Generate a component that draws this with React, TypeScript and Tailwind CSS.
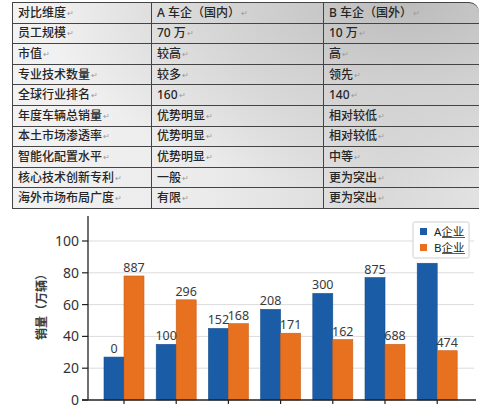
import React from "react";

const rows: [string, string, string][] = [
  ["对比维度", "A 车企（国内）", "B 车企（国外）"],
  ["员工规模", "70 万", "10 万"],
  ["市值", "较高", "高"],
  ["专业技术数量", "较多", "领先"],
  ["全球行业排名", "160", "140"],
  ["年度车辆总销量", "优势明显", "相对较低"],
  ["本土市场渗透率", "优势明显", "相对较低"],
  ["智能化配置水平", "优势明显", "中等"],
  ["核心技术创新专利", "一般", "更为突出"],
  ["海外市场布局广度", "有限", "更为突出"],
];

const groups = [
  { a: 27, b: 78, la: "0", lb: "887" },
  { a: 35, b: 63, la: "100", lb: "296" },
  { a: 45, b: 48, la: "152", lb: "168" },
  { a: 57, b: 42, la: "208", lb: "171" },
  { a: 67, b: 38, la: "300", lb: "162" },
  { a: 77, b: 35, la: "875", lb: "688" },
  { a: 86, b: 31, la: "", lb: "474" },
];

const BLUE = "#1b5ca6";
const ORANGE = "#e8711f";

function Chart() {
  const y0 = 191;
  const k = 1.59;
  const ticks = [0, 20, 40, 60, 80, 100];
  const font = "'Noto Sans','Noto Sans CJK SC',sans-serif";
  return (
    <svg width={487} height={202} viewBox="0 0 487 202" className="block">
      {ticks.slice(1).map((t) => (
        <line key={t} x1={88} x2={474} y1={y0 - t * k} y2={y0 - t * k} stroke="#dcdcdc" strokeWidth={1} />
      ))}
      {groups.map((g, i) => {
        const cx = 124 + i * 52.2;
        const ha = g.a * k;
        const hb = g.b * k;
        return (
          <g key={i}>
            <rect x={cx - 20} y={y0 - ha} width={20} height={ha} fill={BLUE} stroke="#174f8f" strokeWidth={0.6} />
            <rect x={cx} y={y0 - hb} width={20} height={hb} fill={ORANGE} stroke="#c95f17" strokeWidth={0.6} />
            {g.la && (
              <text x={cx - 10} y={y0 - ha - 4} fontSize={12.5} textAnchor="middle" fill="#3a3a3a" fontFamily={font}>
                {g.la}
              </text>
            )}
            <text x={cx + 10} y={y0 - hb - 4} fontSize={12.5} textAnchor="middle" fill="#3a3a3a" fontFamily={font}>
              {g.lb}
            </text>
            <line x1={cx} x2={cx} y1={y0} y2={y0 + 4} stroke="#222" strokeWidth={1.2} />
          </g>
        );
      })}
      <line x1={88} x2={88} y1={7} y2={y0} stroke="#222" strokeWidth={1.3} />
      <line x1={82} x2={476} y1={y0} y2={y0} stroke="#222" strokeWidth={1.3} />
      {ticks.map((t) => (
        <g key={t}>
          <line x1={82} x2={88} y1={y0 - t * k} y2={y0 - t * k} stroke="#222" strokeWidth={1.2} />
          <text x={79} y={y0 - t * k + 5} fontSize={14} textAnchor="end" fill="#333" fontFamily={font}>
            {t}
          </text>
        </g>
      ))}
      <text
        transform="translate(46,95) rotate(-90)"
        fontSize={12}
        fontWeight={600}
        textAnchor="middle"
        fill="#3a3a3a"
        fontFamily={font}
      >
        销量（万辆）
      </text>
      <rect x={413} y={13} width={56} height={36} fill="#fff" stroke="#cfcfcf" strokeWidth={1} rx={1.5} />
      <rect x={420} y={19} width={7} height={7} fill={BLUE} />
      <rect x={420} y={35} width={7} height={7} fill={ORANGE} />
      <text x={434} y={26.5} fontSize={11.5} fill="#222" fontFamily={font}>
        A企业
      </text>
      <line x1={442} x2={465} y1={28.5} y2={28.5} stroke="#333" strokeWidth={0.8} />
      <text x={434} y={42.5} fontSize={11.5} fill="#222" fontFamily={font}>
        B企业
      </text>
      <line x1={442} x2={465} y1={44.5} y2={44.5} stroke="#333" strokeWidth={0.8} />
    </svg>
  );
}

export default function App() {
  return (
    <div className="w-[487px] h-[410px] overflow-hidden bg-white font-['Noto_Sans','Noto_Sans_CJK_SC',sans-serif]">
      <div className="pt-[2px] pl-[12px]">
        <div className="w-[467px] rounded-tr-[10px] overflow-hidden border-t border-l border-[#444] bg-[radial-gradient(ellipse_at_85%_0%,#bcbcbc_0%,#d2d2d2_30%,transparent_65%),linear-gradient(100deg,#f3f3f3_0%,#ebebeb_45%,#d9d9d9_80%,#e2e2e2_100%)]">
          {rows.map((r, i) => (
            <div key={i} className="grid grid-cols-[139px_172px_156px] h-[20.6px]">
              {r.map((c, j) => (
                <div
                  key={j}
                  className="flex items-center border-r border-b border-[#444] pl-[5px] text-[12px] font-medium leading-none text-[#262626] whitespace-nowrap"
                >
                  {c}
                  <span className="ml-[1px] text-[8px] text-[#9a9a9a]">↵</span>
                </div>
              ))}
            </div>
          ))}
        </div>
      </div>
      <Chart />
    </div>
  );
}
